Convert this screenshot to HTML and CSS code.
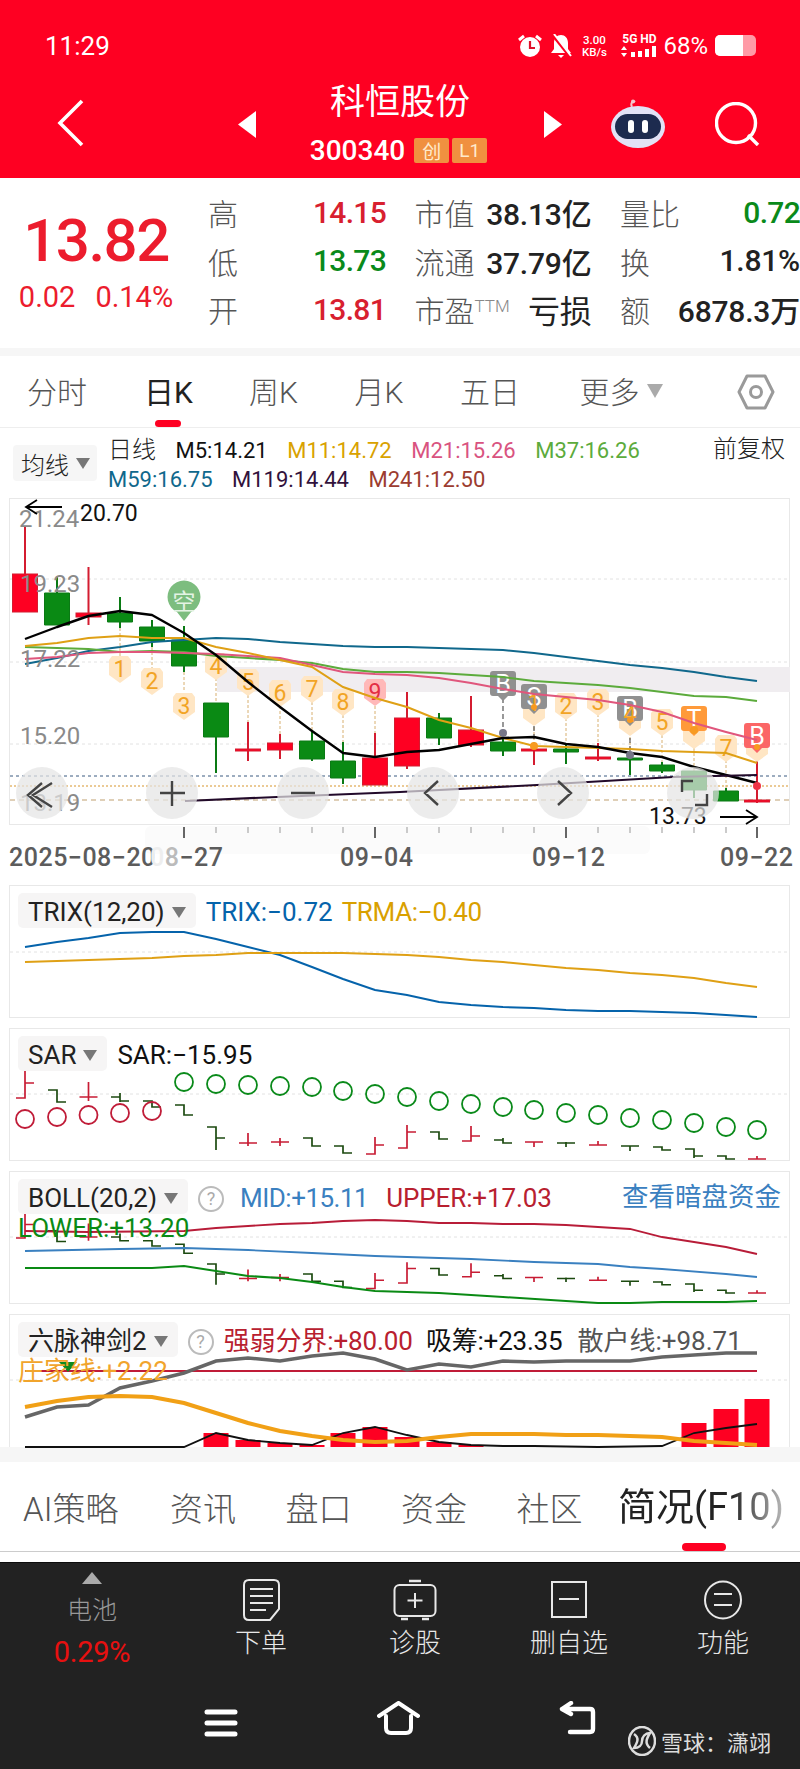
FILE: index.html
```html
<!DOCTYPE html>
<html lang="zh">
<head>
<meta charset="utf-8">
<title>科恒股份</title>
<link rel="stylesheet" href="styles.css">
</head>
<body>
<div class="page">
  <header class="top">
    <div class="status">
      <span class="clock">11:29</span>
      <div class="status-icons">
        <svg width="26" height="24" viewBox="0 0 26 24"><circle cx="13" cy="13" r="10" fill="#fff"/><path d="M13 7v7h5" fill="none" stroke="#e0102a" stroke-width="2.2"/><path d="M2 6l5-4M24 6l-5-4" stroke="#fff" stroke-width="3"/></svg>
        <svg width="24" height="24" viewBox="0 0 24 24"><path d="M12 1c4 0 7 3 7 8v6l3 4H2l3-4V9c0-5 3-8 7-8z" fill="#fff"/><path d="M9 21h6l-3 3z" fill="#fff"/><path d="M3 0l19 24" stroke="#fe0022" stroke-width="3"/><path d="M5 0l17 22" stroke="#fff" stroke-width="2"/></svg>
        <div class="netspeed"><span>3.00</span><span>KB/s</span></div>
        <div class="signal">
          <span class="sig-label">5G HD</span>
          <svg width="36" height="11" viewBox="0 0 36 11"><path d="M3 0l3 4H0zM3 11l3-4H0z" fill="#fff"/><path d="M10 6h4v5h-4zM17 5h4v6h-4zM24 3h4v8h-4zM31 0h4v11h-4z" fill="#fff"/></svg>
        </div>
        <span class="battery-pct">68%</span>
        <div class="battery"><div class="battery-fill"></div></div>
      </div>
    </div>
    <div class="titlebar">
      <div class="title-left">
        <svg width="28" height="48" viewBox="0 0 28 48"><path d="M25 2L3 24l22 22" fill="none" stroke="#fff" stroke-width="3.6"/></svg>
      </div>
      <div class="title-center">
        <svg width="18" height="27" viewBox="0 0 18 27"><path d="M18 0v27L0 13.500z" fill="#fff"/></svg>
        <div class="title-block">
          <div class="stock-name">科恒股份</div>
          <div class="stock-code"><span>300340</span><em class="badge">创</em><em class="badge">L1</em></div>
        </div>
        <svg width="18" height="27" viewBox="0 0 18 27"><path d="M0 0v27l18-13.500z" fill="#fff"/></svg>
      </div>
      <div class="title-right">
        <svg width="54" height="50" viewBox="0 0 54 50"><path d="M21 8c-2-4 1-7 3-5" fill="none" stroke="#f3c7cf" stroke-width="2"/><circle cx="22" cy="2.500" r="2" fill="#f3c7cf"/><ellipse cx="27" cy="28" rx="27" ry="21" fill="#e2e2f6"/><rect x="4" y="15" width="46" height="25" rx="12.500" fill="#1d2b4f"/><rect x="17" y="21" width="6" height="13" rx="3" fill="#fff"/><rect x="31" y="21" width="6" height="13" rx="3" fill="#fff"/></svg>
        <svg class="search" width="46" height="44" viewBox="0 0 46 44"><ellipse cx="21" cy="21" rx="19.500" ry="19.500" fill="none" stroke="#fff" stroke-width="3.400"/><path d="M33 33l10 10" stroke="#fff" stroke-width="3.400"/></svg>
      </div>
    </div>
  </header>

  <section class="quote">
    <div class="price">
      <div class="last">13.82</div>
      <div class="change"><span>0.02</span><span>0.14%</span></div>
    </div>
    <div class="stats">
      <div class="stat"><span class="lbl">高</span><span class="up">14.15</span></div>
      <div class="stat"><span class="lbl">市值</span><span class="val">38.13亿</span></div>
      <div class="stat"><span class="lbl">量比</span><span class="down">0.72</span></div>
      <div class="stat"><span class="lbl">低</span><span class="down">13.73</span></div>
      <div class="stat"><span class="lbl">流通</span><span class="val">37.79亿</span></div>
      <div class="stat"><span class="lbl">换</span><span class="val">1.81%</span></div>
      <div class="stat"><span class="lbl">开</span><span class="up">13.81</span></div>
      <div class="stat"><span class="lbl">市盈<sup>TTM</sup></span><span class="val val-cjk">亏损</span></div>
      <div class="stat"><span class="lbl">额</span><span class="val">6878.3万</span></div>
    </div>
  </section>
  <div class="band"></div>

  <nav class="ktabs">
    <span class="ktab ktab-w1">分时</span>
    <span class="ktab ktab-w2 active">日K</span>
    <span class="ktab ktab-w3">周K</span>
    <span class="ktab ktab-w3">月K</span>
    <span class="ktab ktab-w3">五日</span>
    <span class="ktab ktab-more">更多<i class="tri tri-lg"></i></span>
    <svg class="gear" width="38" height="36" viewBox="0 0 38 36"><path d="M10 2h18l8 16-8 16H10L2 18z" fill="none" stroke="#9a9a9a" stroke-width="3" stroke-linejoin="round"/><circle cx="19" cy="18" r="5.500" fill="none" stroke="#9a9a9a" stroke-width="3"/></svg>
  </nav>

  <section class="legend">
    <div class="ma-btn">均线<i class="tri"></i></div>
    <div class="ma-vals">
      <div class="ma-row">
        <span class="ma-title">日线</span>
        <span class="c-black">M5:14.21</span>
        <span class="c-gold">M11:14.72</span>
        <span class="c-pink">M21:15.26</span>
        <span class="c-green">M37:16.26</span>
      </div>
      <div class="ma-row">
        <span class="c-blue">M59:16.75</span>
        <span class="c-purple">M119:14.44</span>
        <span class="c-brown">M241:12.50</span>
      </div>
    </div>
    <span class="adjust">前复权</span>
  </section>

  <svg class="kline" width="800" height="385" viewBox="0 490 800 385">
    <defs>
      <path id="tag" d="M-8-13H8l3 4V6L0 14-11 6V-9z"/>
      <path id="ltag" d="M-10-13H10q3 0 3 3V9q0 3-3 3H5L0 17-5 12H-10q-3 0-3-3V-10q0-3 3-3z"/>
    </defs>
    <rect class="smear" x="145" y="826" width="505" height="28" rx="6"/>
    <rect class="frame" x="9.500" y="498.500" width="780" height="326"/>
    <rect class="kband" x="217" y="667" width="573" height="25"/>
    <path class="dotted" d="M10 579H789M10 662H789M10 744H789"/>
    <path class="refline-blue" d="M10 776H789"/>
    <path class="refline-orange" d="M10 786H789"/>
    <path class="refline-tan" d="M10 800H789"/>

    <path class="stem" d="M120 628V657M152 647V668M184 672V692M216 678V703M248 695V722M280 706V734M312 702V730M343 715V742M375 706V733M534 712V745M566 718V744M598 714V745M630 722V755M662 735V762M694 733V771M726 760V788M757 750V800"/>
    <path class="stem-dark" d="M503 698V735M534 710V745M630 722V755"/>

    <path class="wick-red" d="M25 527V574M88.500 567V625M248 722V761M280 734V759M375 733V758M407 692V769M471 696V747M534 745V765M598 743V761M757 753V803"/>
    <rect class="body-red" x="12.500" y="574" width="25" height="38"/>
    <rect class="body-red" x="76" y="613" width="25" height="4"/>
    <rect class="body-red" x="235.500" y="749" width="25" height="2"/>
    <rect class="body-red" x="267.500" y="743" width="25" height="7"/>
    <rect class="body-red" x="362.500" y="758" width="25" height="27"/>
    <rect class="body-red" x="394.500" y="718" width="25" height="48"/>
    <rect class="body-red" x="458.500" y="730" width="25" height="15"/>
    <rect class="body-red" x="521.500" y="749" width="25" height="2"/>
    <rect class="body-red" x="585.500" y="757" width="25" height="2"/>
    <rect class="body-red" x="744.500" y="800" width="25" height="2"/>
    <path class="wick-green" d="M57 577V593M120 597V628M152 620V647M184 626V640M184 666V672M216 737V773M312 730V761M343 742V784M439 713V745M503 735V756M566 744V764M630 755V775M662 762V773M694 790V798M726 788V791"/>
    <path class="body-green" d="M44.500 593h25v32h-25zM107.500 613h25v9h-25zM139.500 627h25v14h-25zM171.500 640h25v26h-25zM203.500 703h25v34h-25zM299.500 741h25v18h-25zM330.500 761h25v17h-25zM426.500 718h25v20h-25zM490.500 742h25v9h-25zM553.500 749h25v3h-25zM617.500 758h25v2h-25zM649.500 765h25v6h-25zM681.500 771h25v19h-25zM713.500 791h25v10h-25z"/>

    <g class="numtag">
      <use href="#tag" x="120" y="669"/><use href="#tag" x="152" y="681"/><use href="#tag" x="184" y="706"/><use href="#tag" x="216" y="666"/><use href="#tag" x="248" y="682"/><use href="#tag" x="280" y="693"/><use href="#tag" x="312" y="689"/><use href="#tag" x="343" y="702"/>
      <use href="#tag" x="534" y="712"/><use href="#tag" x="566" y="706"/><use href="#tag" x="598" y="702"/><use href="#tag" x="630" y="722"/><use href="#tag" x="662" y="722"/><use href="#tag" x="694" y="735"/><use href="#tag" x="726" y="748"/><use href="#tag" x="757" y="748"/>
    </g>
    <use class="redtag" href="#tag" x="375" y="692"/>
    <g class="ltag-grey">
      <use href="#ltag" x="503" y="684"/><use href="#ltag" x="534" y="697"/><use href="#ltag" x="630" y="709"/>
    </g>
    <use class="ltag-orange" href="#ltag" x="694" y="719"/>
    <use class="ltag-red" href="#ltag" x="757" y="736"/>
    <g class="ltag-text">
      <text x="503" y="693">B</text><text x="534" y="706">S</text><text x="630" y="718">B</text><text x="694" y="728">T</text><text x="757" y="745">B</text>
    </g>
    <g class="numtxt">
      <text x="120" y="677">1</text><text x="152" y="689">2</text><text x="184" y="714">3</text><text x="216" y="674">4</text><text x="248" y="690">5</text><text x="280" y="701">6</text><text x="312" y="697">7</text><text x="343" y="710">8</text>
      <text x="534" y="711">1</text><text x="566" y="714">2</text><text x="598" y="710">3</text><text x="630" y="722">4</text><text x="662" y="730">5</text><text x="726" y="756">7</text>
    </g>
    <text class="numtxt-red" x="375" y="700">9</text>

    <path class="kong-pin" d="M184 621l-7-9a16.500 16.500 0 1 1 14 0z"/>
    <text class="kong" x="184" y="610">空</text>

    <polyline class="ln-blue" points="25,664 57,658 88.500,651 120,647 152,642 184,640 216,638 248,639 280,642 312,644 343,646 375,647 407,647 439,648 471,649 503,650 534,653 566,657 598,661 630,665 662,668 694,672 726,677 757,681"/>
    <polyline class="ln-green" points="25,647 57,648 88.500,649 120,652 152,651 184,652 216,656 248,658 280,660 312,663 343,669 375,672 407,672 439,673 471,675 503,677 534,681 566,683 598,685 630,688 662,692 694,696 726,697 757,701"/>
    <polyline class="ln-pink" points="25,659 57,657 88.500,653 120,652 152,652 184,653 216,654 248,656 280,658 312,665 343,672 375,674 407,675 439,678 471,683 503,689 534,694 566,697 598,700 630,705 662,712 694,723 726,732 757,740"/>
    <polyline class="ln-gold" points="25,646 57,643 88.500,638 120,636 152,638 184,638 216,647 248,653 280,660 312,667 343,687 375,698 407,707 439,720 471,728 503,738 534,746 566,747 598,748 630,749 662,751 694,752 726,753 757,763"/>
    <polyline class="ln-black" points="25,639 57,627 88.500,616 120,611 152,615 184,633 216,655 248,682 280,707 312,731 343,753 375,757 407,752 439,750 471,744 503,738 534,737 566,744 598,747 630,753 662,757 694,767 726,775 757,783"/>
    <polyline class="ln-m119" points="185,801 277,797 400,792 537,785 673,777 757,775"/>
    <circle class="dot-grey" cx="503" cy="733" r="4"/><circle class="dot-grey" cx="630" cy="755" r="4"/>
    <circle class="dot-orange" cx="534" cy="746" r="4"/><circle class="dot-orange" cx="534" cy="707" r="3"/><circle class="dot-orange" cx="630" cy="720" r="3"/><circle class="dot-orange" cx="694" cy="730" r="4"/><circle class="dot-orange" cx="757" cy="747" r="3"/>
    <circle class="dot-red" cx="757" cy="786" r="4"/>

    <g class="axis-labels">
      <text x="19" y="527">21.24</text><text x="20" y="592">19.23</text><text x="20" y="667">17.22</text><text x="20" y="744">15.20</text><text x="20" y="811">13.19</text>
    </g>
    <path class="arrow" d="M62 507H26M37 500l-11 7 11 7"/>
    <text class="extreme" x="80" y="521">20.70</text>
    <text class="extreme" x="649" y="824">13.73</text>
    <path class="arrow" d="M720 817H757M746 810l11 7-11 7"/>

    <g class="ctl">
      <circle cx="42" cy="793" r="26"/><circle cx="172" cy="793" r="26"/><circle cx="303" cy="793" r="26"/><circle cx="433" cy="793" r="26"/><circle cx="563" cy="793" r="26"/><circle cx="693" cy="793" r="26"/>
    </g>
    <path class="ctl-icon" d="M52 783L33 795l19 12M42 783L28 795l14 12M160 793h25M172 781v25M291 793h24M438 781l-13 12 13 12M558 781l13 12-13 12M682 792v-11h11M707 794v11h-12"/>

    <path class="tick" d="M216 827v6M248 827v6M280 827v6M312 827v6M343 827v6M407 827v6M439 827v6M471 827v6M503 827v6M534 827v6M598 827v6M630 827v6M662 827v6M694 827v6M726 827v6"/>
    <path class="tick-major" d="M184 827v11M375 827v11M566 827v11M757 827v11"/>
    <g class="dates">
      <text x="9" y="866">2025−08−20</text>
      <text x="150" y="866"><tspan class="fade1">0</tspan><tspan class="fade2">8</tspan>−27</text>
      <text x="340" y="866">09−04</text>
      <text x="532" y="866">09−12</text>
      <text x="720" y="866">09−22</text>
    </g>
  </svg>

  <section class="panel">
    <svg class="plot" width="779" height="131" viewBox="10 886 779 131">
      <path class="dotted" d="M10 952H789"/>
      <polyline class="ln-trix" points="25,947 57,942 88.500,938 120,933 152,932 184,932 216,939 248,947 280,955 312,967 343,979 375,990 407,995 439,1002 471,1005 503,1007 534,1008 566,1010 598,1011 630,1011 662,1012 694,1013 726,1015 757,1017"/>
      <polyline class="ln-trma" points="25,962 57,961 88.500,960 120,959 152,958 184,956 216,955 248,953 280,953 312,953 343,953 375,954 407,955 439,957 471,960 503,962 534,965 566,968 598,970 630,973 662,975 694,978 726,983 757,987"/>
    </svg>
    <div class="ind-legend">
      <div class="ind-btn">TRIX(12,20)<i class="tri"></i></div>
      <span class="c-trix">TRIX:−0.72</span>
      <span class="c-trma">TRMA:−0.40</span>
    </div>
  </section>

  <section class="panel">
    <svg class="plot" width="779" height="131" viewBox="10 1029 779 131">
      <path class="dotted" d="M10 1094H789"/>
      <g id="sar-bars">
        <path class="sar-red" d="M25 1067V1098H16M25 1083H34M88.500 1082V1101M79.500 1097H97.500M248 1133V1146M239 1143H257M280 1138V1146M271 1142H289M366 1154H375V1137M375 1145H384M398 1148H407V1125M407 1132H416M462 1141H471V1126M471 1136H480M525 1142H543M534 1142V1147M589 1145H607M598 1141V1145M748 1159H766M757 1156V1159"/>
        <path class="sar-green" d="M48 1090H57V1102H66M120 1093V1102M111 1097H120M120 1101H129M143 1101H152V1107H161M175 1105H184V1115H193M207 1127H216V1150M216 1138H225M303 1138H312V1146H321M334 1146H343V1153H352M430 1132H439V1139H448M494 1140H503V1143H512M503 1138V1140M557 1143H575M566 1142V1147M621 1146H639M630 1146V1151M653 1147H662V1150H671M685 1149H694V1158M694 1156H703M717 1156H726V1159H735"/>
      </g>
      <g class="sar-ring-red">
        <circle cx="25" cy="1119" r="9"/><circle cx="57" cy="1117" r="9"/><circle cx="88.500" cy="1115" r="9"/><circle cx="120" cy="1113" r="9"/><circle cx="152" cy="1111" r="9"/>
      </g>
      <g class="sar-ring-green">
        <circle cx="184" cy="1082" r="9"/><circle cx="216" cy="1084" r="9"/><circle cx="248" cy="1085" r="9"/><circle cx="280" cy="1086" r="9"/><circle cx="312" cy="1087" r="9"/><circle cx="343" cy="1091" r="9"/><circle cx="375" cy="1094" r="9"/><circle cx="407" cy="1097" r="9"/><circle cx="439" cy="1101" r="9"/><circle cx="471" cy="1104" r="9"/><circle cx="503" cy="1107" r="9"/><circle cx="534" cy="1110" r="9"/><circle cx="566" cy="1113" r="9"/><circle cx="598" cy="1115" r="9"/><circle cx="630" cy="1118" r="9"/><circle cx="662" cy="1120" r="9"/><circle cx="694" cy="1123" r="9"/><circle cx="726" cy="1127" r="9"/><circle cx="757" cy="1130" r="9"/>
      </g>
    </svg>
    <div class="ind-legend">
      <div class="ind-btn">SAR<i class="tri"></i></div>
      <span class="c-ink">SAR:−15.95</span>
    </div>
  </section>

  <section class="panel">
    <svg class="plot" width="779" height="131" viewBox="10 1172 779 131">
      <path class="dotted" d="M10 1237H789"/>
      <use href="#sar-bars" transform="translate(0 249.800) scale(1 .9)"/>
      <polyline class="ln-up" points="25,1231 88,1232 184,1231 216,1228 248,1226 280,1224 312,1223 343,1221 375,1220 407,1221 439,1223 471,1223 503,1224 534,1224 566,1225 598,1227 630,1229 662,1237 694,1242 726,1247 757,1254"/>
      <polyline class="ln-mid" points="25,1251 120,1249 184,1248 248,1250 312,1253 375,1256 407,1257 471,1259 534,1262 598,1264 630,1267 662,1269 726,1274 757,1277"/>
      <polyline class="ln-low" points="25,1268 88,1268 152,1268 184,1266 216,1271 248,1276 280,1278 312,1282 343,1287 375,1291 407,1292 439,1293 503,1297 566,1301 598,1303 630,1303 662,1302 726,1302 757,1301"/>
    </svg>
    <div class="ind-legend">
      <div class="ind-btn">BOLL(20,2)<i class="tri"></i></div>
      <span class="help">?</span>
      <span class="c-mid">MID:+15.11</span>
      <span class="c-upper c-upper-boll">UPPER:+17.03</span>
      <span class="dark-link">查看暗盘资金</span>
    </div>
    <div class="ind-legend2 c-lower">LOWER:+13.20</div>
  </section>

  <section class="panel panel-last">
    <svg class="plot" width="779" height="132" viewBox="10 1315 779 132">
      <path class="dotted" d="M10 1380H789"/>
      <path class="liu-bars" d="M203.500 1433h25v14h-25zM235.500 1440h25v7h-25zM267.500 1443h25v4h-25zM299.500 1445h25v2h-25zM330.500 1433h25v14h-25zM362.500 1427h25v20h-25zM394.500 1437h25v10h-25zM426.500 1442h25v5h-25zM458.500 1445h25v2h-25zM681.500 1423h25v24h-25zM713.500 1409h25v38h-25zM744.500 1399h25v48h-25z"/>
      <path class="liu-red" d="M25 1371H757"/>
      <polyline class="liu-gray" points="25,1417 57,1407 88.500,1405 120,1388 152,1381 184,1373 216,1361 248,1358 280,1361 312,1356 343,1353 375,1359 407,1370 439,1364 471,1367 503,1361 534,1362 566,1361 598,1361 630,1361 662,1357 694,1355 726,1353 757,1353"/>
      <polyline class="liu-black" points="25,1447 184,1447 216,1433 248,1440 280,1443 312,1445 343,1433 375,1427 407,1435 439,1442 471,1445 503,1446 534,1446 598,1447 662,1446 694,1433 726,1428 757,1424"/>
      <polyline class="liu-orange" points="25,1407 57,1401 88.500,1397 120,1396 152,1397 184,1403 216,1413 248,1423 280,1431 312,1436 343,1440 375,1442 407,1441 439,1437 471,1434 503,1434 534,1434 566,1435 598,1435 630,1436 662,1437 694,1441 726,1443 757,1445"/>
      <path class="liu-mark" d="M59 1362h18l-9 10z"/>
    </svg>
    <div class="ind-legend">
      <div class="ind-btn">六脉神剑2<i class="tri"></i></div>
      <span class="help">?</span>
      <span class="c-upper">强弱分界:+80.00</span>
      <span class="c-ink c-xi">吸筹:+23.35</span>
      <span class="c-gray">散户线:+98.71</span>
    </div>
    <div class="ind-legend2 c-zhuang">庄家线:+2.22</div>
  </section>
  <div class="band band-lg"></div>

  <nav class="subtabs">
    <span class="subtab st-a">AI策略</span>
    <span class="subtab st-b">资讯</span>
    <span class="subtab st-b">盘口</span>
    <span class="subtab st-b">资金</span>
    <span class="subtab st-b">社区</span>
    <span class="subtab st-active">简况(F10)</span>
  </nav>
  <div class="gap"></div>

  <footer class="dock">
    <div class="actions">
      <div class="action action-first">
        <i class="tri-up"></i>
        <span class="bat-label">电池</span>
        <span class="bat-pct">0.29%</span>
      </div>
      <div class="action">
        <svg width="37" height="42" viewBox="0 0 37 42"><path d="M6 1h25q5 0 5 5v24l-9 11H6q-5 0-5-5V6q0-5 5-5z" fill="none" stroke="#e8e8e8" stroke-width="2"/><path d="M7 10h23M7 17h23M7 24h23M7 31h16" stroke="#e8e8e8" stroke-width="2"/></svg>
        <span>下单</span>
      </div>
      <div class="action">
        <svg width="44" height="42" viewBox="0 0 44 42"><path d="M16 2h12M8 40h7M29 40h7" stroke="#e8e8e8" stroke-width="2.400"/><rect x="1.500" y="6" width="41" height="31" rx="5" fill="none" stroke="#e8e8e8" stroke-width="2"/><path d="M22 14v15M14.500 21.500h15" stroke="#e8e8e8" stroke-width="2"/></svg>
        <span>诊股</span>
      </div>
      <div class="action">
        <svg width="36" height="42" viewBox="0 0 36 42"><rect x="1" y="3" width="34" height="35" fill="none" stroke="#e8e8e8" stroke-width="2"/><path d="M8 20h20" stroke="#e8e8e8" stroke-width="2"/></svg>
        <span>删自选</span>
      </div>
      <div class="action">
        <svg width="38" height="42" viewBox="0 0 38 42"><ellipse cx="19" cy="21" rx="18" ry="18.500" fill="none" stroke="#e8e8e8" stroke-width="2"/><path d="M10 15h18M10 26h18" stroke="#e8e8e8" stroke-width="2"/></svg>
        <span>功能</span>
      </div>
    </div>
    <div class="sysnav">
      <svg class="nav-menu" width="34" height="28" viewBox="0 0 34 28"><path d="M3 3h28M3 14h28M3 25h28" stroke="#fff" stroke-width="5" stroke-linecap="round"/></svg>
      <svg width="43" height="34" viewBox="0 0 43 34"><path d="M2 15L21.500 2 41 15M9 15v12q0 5 5 5h15q5 0 5-5V15" fill="none" stroke="#fff" stroke-width="4" stroke-linecap="round" stroke-linejoin="round"/></svg>
      <svg width="37" height="34" viewBox="0 0 37 34"><path d="M12 2L3 8l9 5M3 8h28q3 0 3 3v17q0 3-3 3H11" fill="none" stroke="#fff" stroke-width="4.400" stroke-linecap="round" stroke-linejoin="round"/></svg>
    </div>
    <div class="watermark">
      <svg width="28" height="30" viewBox="0 0 28 30"><ellipse cx="14" cy="15" rx="13" ry="14" fill="none" stroke="#ddd" stroke-width="2.500"/><path d="M6 8c6 4 3 9 0 14 5 0 8-3 8-7s3-8 8-8c-3 5-6 10 0 15" fill="none" stroke="#ddd" stroke-width="2.500"/></svg>
      <span>雪球：潇翊</span>
    </div>
  </footer>
</div>
</body>
</html>
```
FILE: styles.css
```css
* { box-sizing: border-box; }
html, body { margin: 0; padding: 0; background: #fff; }
body { font-family: Roboto, "Noto Sans CJK SC", sans-serif; color: #222; }
.page { width: 800px; height: 1769px; overflow: hidden; }
em { font-style: normal; }

/* header */
.top { height: 178px; background: #fe0022; color: #fff; }
.status { height: 78px; padding: 13px 44px 0 45px; display: flex; justify-content: space-between; align-items: center; }
.clock { font-size: 26px; font-weight: 400; }
.status-icons { display: flex; align-items: center; gap: 6px; }
.netspeed { display: flex; flex-direction: column; align-items: center; font-size: 11.500px; line-height: 12px; width: 30px; margin-left: 0; font-weight: 500; }
.signal { display: flex; flex-direction: column; align-items: center; margin-left: 6px; line-height: 11px; }
.sig-label { font-size: 12px; font-weight: 700; margin-bottom: 1px; }
.battery-pct { font-size: 24px; margin-left: 0; }
.battery { width: 41px; height: 21px; background: #ff9aa6; border-radius: 5px; margin-left: 1px; overflow: hidden; }
.battery-fill { width: 68%; height: 100%; background: #fff; }
.titlebar { height: 100px; padding-bottom: 6px; display: grid; grid-template-columns: 1fr 324px 1fr; align-items: center; }
.title-left { padding-left: 57px; display: flex; align-items: center; margin-top: -4px; }
.title-center { display: flex; justify-content: space-between; align-items: center; margin-top: -2px; }
.title-block { display: flex; flex-direction: column; align-items: center; }
.stock-name { font-size: 35px; line-height: 46px; letter-spacing: 0; margin-top: -4px; }
.stock-code { display: flex; align-items: center; height: 28px; margin-top: 10px; font-size: 28px; font-weight: 500; }
.stock-code span { margin-right: 9px; }
.badge { display: inline-flex; align-items: center; justify-content: center; width: 35px; height: 25px; background: #f09040; border-radius: 2px; font-size: 19px; font-weight: 400; color: #ffeacc; margin-right: 3px; }
.title-right { display: flex; align-items: center; justify-content: flex-end; gap: 50px; padding-right: 39px; margin-top: -2px; }
.search { margin-top: 0; }

/* quote */
.quote { height: 170px; display: flex; }
.price { width: 208px; display: flex; flex-direction: column; align-items: center; padding-top: 28px; padding-right: 16px; color: #ec1c2d; }
.last { font-size: 60px; line-height: 70px; font-weight: 500; letter-spacing: -1.500px; }
.change { display: flex; gap: 20px; font-size: 29px; line-height: 36px; margin-top: 3px; }
.stats { flex: 1; padding-top: 10px; display: grid; grid-template-columns: 178px 177px 180px; column-gap: 28.500px; grid-auto-rows: 48.500px; }
.stat { display: flex; align-items: center; justify-content: space-between; font-size: 30px; white-space: nowrap; }
.lbl { color: #555; font-weight: 300; position: relative; }
.lbl sup { font-size: 17px; line-height: 0; vertical-align: 10px; color: #888; }
.up { color: #d8202f; font-weight: 500; letter-spacing: -.7px; }
.down { color: #0a8a1a; font-weight: 500; letter-spacing: -.7px; }
.val { color: #222; font-weight: 500; letter-spacing: -.2px; }
.val-cjk { font-size: 32px; font-weight: 400; }

.band { height: 8px; background: #f6f6f6; }
.band-lg { height: 15px; }

/* k tabs */
.ktabs { height: 72px; border-bottom: 1px solid #eee; display: flex; align-items: center; padding: 0 0 0 27px; position: relative; }
.ktab { font-size: 30px; color: #555; font-weight: 300; white-space: nowrap; line-height: 72px; position: relative; top: 1px; }
.ktab-w1 { width: 117px; }
.ktab-w2 { width: 105px; }
.ktab-w3 { width: 105.500px; }
.ktab-more { width: 157px; display: flex; align-items: center; margin-left: 14px; }
.ktab.active { color: #222; font-weight: 400; }
.ktab.active::after { content: ""; position: absolute; left: 11px; top: 63px; width: 26px; height: 7px; background: #fe0022; border-radius: 4px; }
.gear { flex: none; }
.tri { display: inline-block; width: 0; height: 0; border-left: 7px solid transparent; border-right: 7px solid transparent; border-top: 11px solid #777; margin-left: 7px; }
.tri-lg { border-top-color: #aaa; border-left-width: 8px; border-right-width: 8px; border-top-width: 14px; margin-left: 7px; margin-top: -4px; }

/* legend */
.legend { height: 62px; display: flex; padding-left: 13px; position: relative; }
.ma-btn { width: 84px; height: 36px; margin-top: 17px; background: #f6f6f6; border-radius: 4px; font-size: 24px; font-weight: 300; color: #222; display: flex; align-items: center; padding-left: 8px; flex: none; white-space: nowrap; }
.ma-vals { margin-left: 11px; display: flex; flex-direction: column; padding-top: 8px; }
.ma-row { display: flex; gap: 19.500px; font-size: 22px; line-height: 29px; white-space: nowrap; }
.ma-title { font-size: 24px; font-weight: 300; color: #222; }
.adjust { font-size: 24px; font-weight: 300; color: #222; position: absolute; left: 713px; top: 3px; line-height: 36px; }
.c-black { color: #111; }
.c-gold { color: #d9a200; }
.c-pink { color: #d9537f; }
.c-green { color: #5cab3c; }
.c-blue { color: #10688c; }
.c-purple { color: #32123c; }
.c-brown { color: #9c3c30; }

/* main chart */
.kline { display: block; }
.frame { fill: none; stroke: #e8e8e8; stroke-width: 1; }
.smear { fill: #fbfbfb; }
.kband { fill: #f0edf0; }
.dotted { fill: none; stroke: #e2e2e2; stroke-width: 1; stroke-dasharray: 3 3; }
.refline-blue { stroke: #3a5a80; stroke-width: 1; stroke-dasharray: 3 3; }
.refline-orange { stroke: #d8962c; stroke-width: 1.200; stroke-dasharray: 2 2; }
.refline-tan { stroke: #c0a070; stroke-width: 1.200; stroke-dasharray: 5 4; }
.stem { fill: none; stroke: #d8b070; stroke-width: 1; stroke-dasharray: 3 2; }
.stem-dark { fill: none; stroke: #555; stroke-width: 1.200; stroke-dasharray: 5 3; }
.wick-red { fill: none; stroke: #d41c30; stroke-width: 2; }
.body-red { fill: #fe0022; stroke: #d41c30; stroke-width: 1; }
.wick-green { fill: none; stroke: #0a7a14; stroke-width: 2; }
.body-green { fill: #0a8a14; stroke: #0a7a14; stroke-width: 1; }
.numtag { fill: #ffe6c4; }
.redtag { fill: #ffb8b8; }
.ltag-grey { fill: #909090; }
.ltag-orange { fill: #ff9a3a; }
.ltag-red { fill: #fb6666; }
.ltag-text text { fill: #fff; font-size: 25px; text-anchor: middle; }
.numtxt text { fill: #f2a425; font-size: 23px; text-anchor: middle; }
.numtxt-red { fill: #e42e44; font-size: 23px; text-anchor: middle; }
.kong-pin { fill: #7dbd7f; }
.kong { fill: #e4f3e4; font-size: 23px; text-anchor: middle; }
.ln-blue { fill: none; stroke: #10688c; stroke-width: 2; }
.ln-green { fill: none; stroke: #5cab3c; stroke-width: 2; }
.ln-pink { fill: none; stroke: #e0567c; stroke-width: 2; }
.ln-gold { fill: none; stroke: #dfa015; stroke-width: 2; }
.ln-black { fill: none; stroke: #000; stroke-width: 2.400; stroke-linejoin: round; }
.ln-m119 { fill: none; stroke: #220a2a; stroke-width: 2.200; }
.dot-grey { fill: #778; }
.dot-orange { fill: #f79a20; }
.dot-red { fill: #ee3344; }
.axis-labels text { fill: #8a8a8a; font-size: 24px; }
.extreme { fill: #111; font-size: 23px; }
.arrow { fill: none; stroke: #000; stroke-width: 1.800; }
.ctl circle { fill: #e4e4e4; fill-opacity: .72; }
.ctl-icon { fill: none; stroke: #444; stroke-width: 2.400; }
.tick { stroke: #bbb; stroke-width: 1.500; }
.tick-major { stroke: #666; stroke-width: 2; }
.dates text { fill: #5c5c5c; font-size: 25px; font-weight: 500; letter-spacing: .5px; }
.fade1 { fill: #eee; }
.fade2 { fill: #bbb; }

/* panels */
.panel { position: relative; margin: 10px 0 0 9px; width: 781px; height: 133px; border: 1px solid #e8e8e8; }
.panel-last { border-bottom: 0; }
.plot { position: absolute; left: 0; top: 0; overflow: visible; }
.ind-legend { position: relative; display: flex; align-items: center; gap: 10px; padding: 7px 0 0 8px; font-size: 26px; line-height: 35px; white-space: nowrap; }
.ind-legend > span { position: relative; top: 2px; }
.ind-legend2 { position: relative; font-size: 26px; line-height: 26px; margin: 1px 0 0 8px; white-space: nowrap; }
.ind-btn { height: 35px; background: #f6f5f5; border-radius: 5px; padding: 3px 10px 0; display: flex; align-items: center; color: #222; }
.c-trix { color: #0563ab; }
.c-trma { color: #d9a000; margin-left: -1px; letter-spacing: -.3px; }
.c-ink { color: #111; }
.c-mid { color: #3a80c0; margin-left: 6px; letter-spacing: -.5px; }
.c-upper { color: #b8202f; letter-spacing: -.1px; }
.c-upper-boll { margin-left: 8px; }
.c-xi { margin-left: 3px; letter-spacing: -.2px; }
.c-gray { color: #555; margin-left: 5px; }
.c-lower { color: #0a8a14; }
.c-zhuang { color: #f1a42c; }
.help { width: 26px; height: 26px; flex: none; border: 2px solid #bbb; border-radius: 50%; color: #aaa; font-size: 18px; line-height: 22px; text-align: center; }
.dark-link { color: #3a80c0; font-size: 26.500px; position: absolute !important; left: 612px; top: 7px !important; }
.ln-trix { fill: none; stroke: #0563ab; stroke-width: 2; }
.ln-trma { fill: none; stroke: #dfa015; stroke-width: 2; }
.sar-red { fill: none; stroke: #c81c34; stroke-width: 1.700; }
.sar-green { fill: none; stroke: #1c4a10; stroke-width: 1.700; }
.sar-ring-red { fill: none; stroke: #c01c38; stroke-width: 1.800; }
.sar-ring-green { fill: none; stroke: #0a8a1a; stroke-width: 1.800; }
.ln-up { fill: none; stroke: #b81c38; stroke-width: 1.800; }
.ln-mid { fill: none; stroke: #3a80c0; stroke-width: 1.800; }
.ln-low { fill: none; stroke: #0a8a14; stroke-width: 2; }
.liu-bars { fill: #fe0022; }
.liu-red { stroke: #c01c38; stroke-width: 2; }
.liu-gray { fill: none; stroke: #666; stroke-width: 3.500; }
.liu-black { fill: none; stroke: #111; stroke-width: 1.800; }
.liu-orange { fill: none; stroke: #f1a016; stroke-width: 4; }
.liu-mark { fill: #0e8a1e; }

/* bottom tabs */
.subtabs { height: 90px; border-bottom: 1px solid #ccc; display: flex; align-items: center; position: relative; padding-left: 23px; white-space: nowrap; }
.subtab { font-size: 33px; color: #555; font-weight: 300; }
.st-a { width: 147px; }
.st-b { width: 115.500px; }
.st-active { font-size: 38px; line-height: 50px; font-weight: 400; margin-left: -14px; position: relative; background: linear-gradient(90deg, #222 68%, #bbb 100%); -webkit-background-clip: text; background-clip: text; color: transparent; }
.st-active::after { content: ""; position: absolute; left: 64px; top: 61px; width: 44px; height: 8px; border-radius: 4px; background: #fe0022; }
.gap { height: 10px; }

/* dock */
.dock { height: 207px; background: #222; border-top: 1px solid #0c0c0c; position: relative; }
.actions { display: grid; grid-template-columns: 184px repeat(4, 154px); height: 138px; padding-top: 16px; }
.action { display: flex; flex-direction: column; align-items: center; color: #e8e8e8; font-size: 26px; font-weight: 300; line-height: 34px; }
.action svg { margin-bottom: 5px; }
.action-first { margin-top: -7px; }
.tri-up { width: 0; height: 0; border-left: 10px solid transparent; border-right: 10px solid transparent; border-bottom: 12px solid #aaa; }
.bat-label { color: #999; font-size: 25px; line-height: 34px; margin-top: 10px; }
.bat-pct { color: #e81010; font-size: 29px; font-weight: 400; line-height: 30px; margin-top: 9px; letter-spacing: -.3px; }
.sysnav { display: flex; justify-content: center; align-items: flex-end; gap: 139px; }
.nav-menu { margin-bottom: -2px; }
.watermark { position: absolute; left: 628px; top: 162px; display: flex; align-items: center; gap: 5px; color: #ddd; font-size: 22px; font-weight: 400; white-space: nowrap; }
```
